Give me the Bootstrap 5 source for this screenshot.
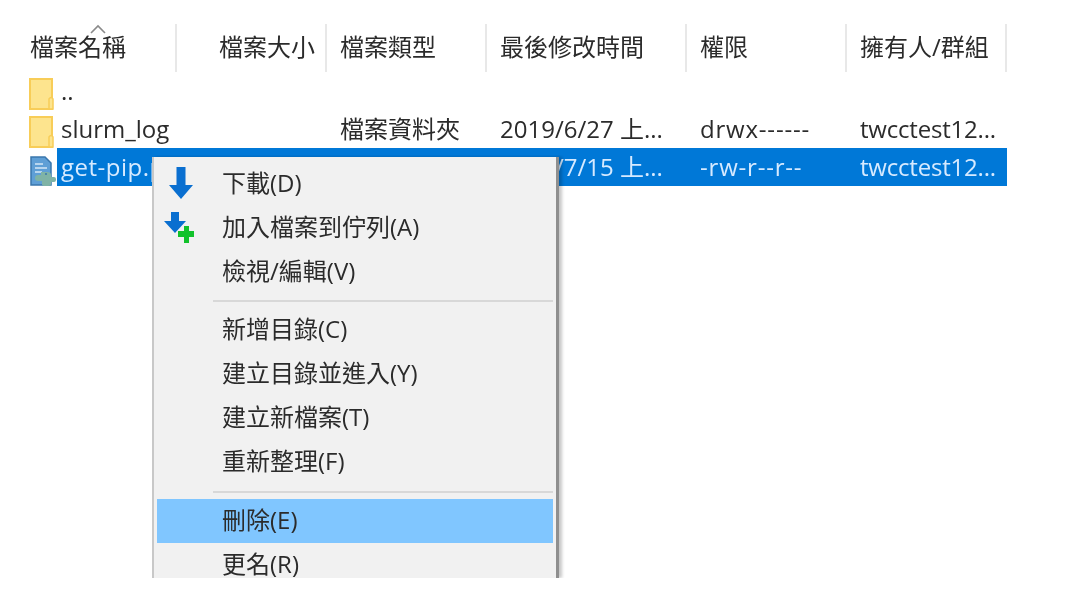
<!DOCTYPE html>
<html lang="zh-Hant">
<head>
  <meta charset="UTF-8" />
  <title>FileZilla 遠端檔案</title>
  <link href="https://cdn.jsdelivr.net/npm/bootstrap@5.3.3/dist/css/bootstrap.min.css" rel="stylesheet" />
  <style>
    body {
      background: #fff;
      color: #2b2b2b;
      font-family: "Open Sans", "Noto Sans CJK TC", sans-serif;
      font-size: 24px;
      overflow: hidden;
    }
    .file-pane {
      position: relative;
      width: 1090px;
      height: 612px;
      padding: 24px 0 0 30px;
      filter: blur(.45px);
    }
    .head-row { height: 48px; width: 977px; position: relative; }
    .head-cell {
      height: 48px;
      line-height: 46px;
      padding-left: 13px;
      border-right: 2px solid #e8e8e8;
      white-space: nowrap;
      overflow: hidden;
    }
    .head-cell:first-of-type { padding-left: 0; }
    .head-cell.col-size { padding: 0 10px 0 0; text-align: right; }
    .sort-caret { position: absolute; left: 60px; top: 0; }
    .col-name { width: 147px; }
    .col-size { width: 150px; }
    .col-type { width: 160px; }
    .col-date { width: 200px; }
    .col-perm { width: 160px; }
    .col-owner { width: 160px; }
    .file-row { height: 38px; width: 977px; }
    .file-icon { width: 27px; height: 38px; flex: none; padding-top: 2px; margin-left: -1px; margin-right: 1px; }
    .file-cells { flex: 1; height: 38px; line-height: 38px; }
    .file-cells > div { padding-left: 13px; white-space: nowrap; overflow: hidden; }
    .file-cells > .col-name { width: 120px; padding-left: 4px; }
    .file-cells > .col-perm { letter-spacing: .8px; }
    .file-cells > .col-owner { letter-spacing: -.2px; }
    .file-cells.picked { background: #0078d7; color: #d6eaff; }
    .file-cells.picked > .col-name { letter-spacing: .5px; }
    .ctx-menu {
      position: absolute;
      left: 152px;
      top: 157px;
      width: 407px;
      height: 421px;
      overflow: hidden;
      background: #f1f1f1;
      border-left: 2px solid #c8c8c8;
      border-right: 3px solid #8f8f8f;
      padding: 5px 3px 0 3px;
      box-shadow: 3px 0 3px rgba(0, 0, 0, .22);
      clip-path: inset(-2px -10px 0 0);
    }
    .ctx-item { height: 44px; line-height: 41px; position: relative; }
    .ctx-item.hot { background: #80c6ff; }
    .ctx-gutter { width: 56px; flex: none; height: 100%; }
    .ctx-label { padding-left: 9px; white-space: nowrap; }
    .ctx-gutter svg { display: block; }
    .ctx-gutter .dl-arrow { margin: 5px 0 0 12px; }
    .ctx-gutter .queue-arrow { margin: 5px 0 0 7px; }
    .ctx-sep { height: 2px; background: #d8d8d8; margin: 6px 0 6px 56px; }
    .ctx-sep.tight { margin: 7px 0 6px 56px; }
  </style>
</head>
<body>
  <div class="file-pane">
    <div class="head-row d-flex">
      <div class="head-cell col-name">檔案名稱</div>
      <div class="head-cell col-size">檔案大小</div>
      <div class="head-cell col-type">檔案類型</div>
      <div class="head-cell col-date">最後修改時間</div>
      <div class="head-cell col-perm">權限</div>
      <div class="head-cell col-owner">擁有人/群組</div>
      <svg class="sort-caret" width="16" height="10" viewBox="0 0 16 10"><path d="M1 9 8 2l7 7" fill="none" stroke="#8a8a8a" stroke-width="1.6"/></svg>
    </div>
    <div class="file-list">
      <div class="file-row d-flex">
        <div class="file-icon">
          <svg width="26" height="34" viewBox="0 0 26 34"><path d="M1 1h22v30H1z" fill="#fde48e" stroke="#f8cd58" stroke-width="2"/><path d="M20 31V21q2-3 4 0v10z" fill="#fde48e" stroke="#f8cd58" stroke-width="1.5"/></svg>
        </div>
        <div class="file-cells d-flex"><div class="col-name">..</div></div>
      </div>
      <div class="file-row d-flex">
        <div class="file-icon">
          <svg width="26" height="34" viewBox="0 0 26 34"><path d="M1 1h22v30H1z" fill="#fde48e" stroke="#f8cd58" stroke-width="2"/><path d="M20 31V21q2-3 4 0v10z" fill="#fde48e" stroke="#f8cd58" stroke-width="1.5"/></svg>
        </div>
        <div class="file-cells d-flex">
          <div class="col-name">slurm_log</div>
          <div class="col-size"></div>
          <div class="col-type">檔案資料夾</div>
          <div class="col-date">2019/6/27 上...</div>
          <div class="col-perm">drwx------</div>
          <div class="col-owner">twcctest12...</div>
        </div>
      </div>
      <div class="file-row d-flex">
        <div class="file-icon">
          <svg width="27" height="30" viewBox="0 0 27 30"><path d="M2 1h14l6 6v22H2z" fill="#5f9fd6" stroke="#3a77ad" stroke-width="1.5"/><path d="M6 8h8M6 12h12M6 16h7" stroke="#d5e7f6" stroke-width="1.5"/><path d="M12 16h6q4 0 4 3v2h3q2 0 2 2v1q0 2-2 2h-3v2q0 2-4 2h-2q-3 0-3-2v-3H9q-3 0-3-3t3-3h3z" fill="#7fb3a6"/><path d="M16 18h2" stroke="#3a77ad" stroke-width="1.5"/></svg>
        </div>
        <div class="file-cells picked d-flex">
          <div class="col-name">get-pip.py</div>
          <div class="col-size"></div>
          <div class="col-type"></div>
          <div class="col-date">2019/7/15 上...</div>
          <div class="col-perm">-rw-r--r--</div>
          <div class="col-owner">twcctest12...</div>
        </div>
      </div>
    </div>

    <div class="ctx-menu">
      <div class="ctx-item d-flex">
        <div class="ctx-gutter">
          <svg class="dl-arrow" width="24" height="32" viewBox="0 0 24 32"><path d="M7.500 0h9v18H24L12 32 0 18h7.500z" fill="#0a6fd0"/></svg>
        </div>
        <div class="ctx-label">下載(D)</div>
      </div>
      <div class="ctx-item d-flex">
        <div class="ctx-gutter">
          <svg class="queue-arrow" width="32" height="33" viewBox="0 0 32 33"><path d="M7 1h8v9h7L11 22 0 10h7z" fill="#0a6fd0"/><path d="M20 15h5v5h5v6h-5v6h-5v-6h-6v-6h6z" fill="#12c22b"/></svg>
        </div>
        <div class="ctx-label">加入檔案到佇列(A)</div>
      </div>
      <div class="ctx-item d-flex"><div class="ctx-gutter"></div><div class="ctx-label">檢視/編輯(V)</div></div>
      <div class="ctx-sep"></div>
      <div class="ctx-item d-flex"><div class="ctx-gutter"></div><div class="ctx-label">新增目錄(C)</div></div>
      <div class="ctx-item d-flex"><div class="ctx-gutter"></div><div class="ctx-label">建立目錄並進入(Y)</div></div>
      <div class="ctx-item d-flex"><div class="ctx-gutter"></div><div class="ctx-label">建立新檔案(T)</div></div>
      <div class="ctx-item d-flex"><div class="ctx-gutter"></div><div class="ctx-label">重新整理(F)</div></div>
      <div class="ctx-sep tight"></div>
      <div class="ctx-item hot d-flex"><div class="ctx-gutter"></div><div class="ctx-label">刪除(E)</div></div>
      <div class="ctx-item d-flex"><div class="ctx-gutter"></div><div class="ctx-label">更名(R)</div></div>
    </div>
  </div>
  <script src="https://cdn.jsdelivr.net/npm/bootstrap@5.3.3/dist/js/bootstrap.bundle.min.js"></script>
</body>
</html>
